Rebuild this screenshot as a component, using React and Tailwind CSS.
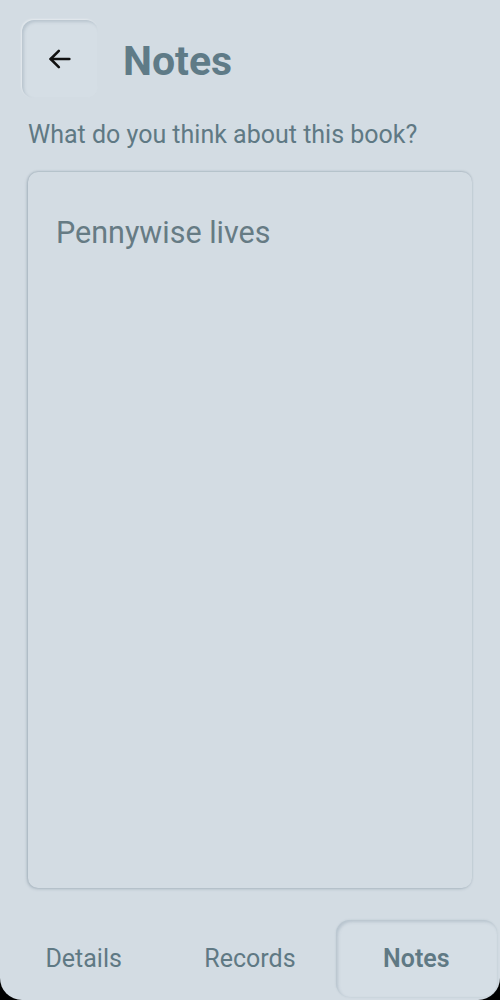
import React, { useState } from 'react';

const font = { fontFamily: 'Roboto, "Noto Sans", sans-serif' };

function App() {
  const [tab, setTab] = useState('notes');
  const [text, setText] = useState('Pennywise lives');

  const tabs = [
    { id: 'details', label: 'Details' },
    { id: 'records', label: 'Records' },
    { id: 'notes', label: 'Notes' },
  ];

  return (
    <div className="bg-black" style={font}>
      <div className="h-[1000px] bg-[#d3dce3] rounded-b-[22px] flex flex-col text-[#5f7984]">
        {/* Header */}
        <div className="flex items-center gap-[25px] pl-[22px] pt-[20px]">
          <button className="w-[76px] h-[78px] rounded-[12px] bg-[#d5dee5] flex items-center justify-center shadow-[inset_2px_2px_3px_rgba(120,140,155,0.3),-1px_-1px_2px_rgba(255,255,255,0.4)]">
            <svg width="28" height="28" viewBox="0 0 24 24" fill="none" stroke="#111" strokeWidth="2.2" strokeLinecap="round" strokeLinejoin="round">
              <path d="M20 12H4" />
              <path d="M11 5l-7 7 7 7" />
            </svg>
          </button>
          <h1 className="text-[41px] font-bold text-[#5f7b87] leading-none pt-[4px]">Notes</h1>
        </div>

        {/* Prompt */}
        <p className="px-[28px] mt-[22px] text-[25px] leading-[30px]">What do you think about this book?</p>

        {/* Notes box */}
        <div className="mx-[28px] mt-[22px] flex-1 rounded-[10px] bg-[#d3dce3] shadow-[-1px_1px_3px_rgba(105,125,140,0.4),0_-1px_2px_rgba(105,125,140,0.3)] pl-[28px] pr-[24px] pt-[43px]">
          <textarea
            value={text}
            onChange={(e) => setText(e.target.value)}
            className="w-full h-full bg-transparent resize-none outline-none text-[30.5px] leading-[36px] text-[#667b84]"
            style={font}
          />
        </div>

        {/* Bottom tabs */}
        <div className="grid grid-cols-3 mt-[32px] mb-[3px] h-[77px] pl-[3px] pr-[3px] gap-[5px]">
          {tabs.map((t) => (
            <button
              key={t.id}
              onClick={() => setTab(t.id)}
              className={`rounded-[14px] text-[25px] flex items-center justify-center ${
                tab === t.id
                  ? 'font-semibold bg-[#d5dee5] shadow-[inset_2px_2px_3px_rgba(120,140,155,0.3),0_0_2px_rgba(120,140,155,0.25)]'
                  : ''
              }`}
            >
              {t.label}
            </button>
          ))}
        </div>
      </div>
    </div>
  );
}

export default App;
